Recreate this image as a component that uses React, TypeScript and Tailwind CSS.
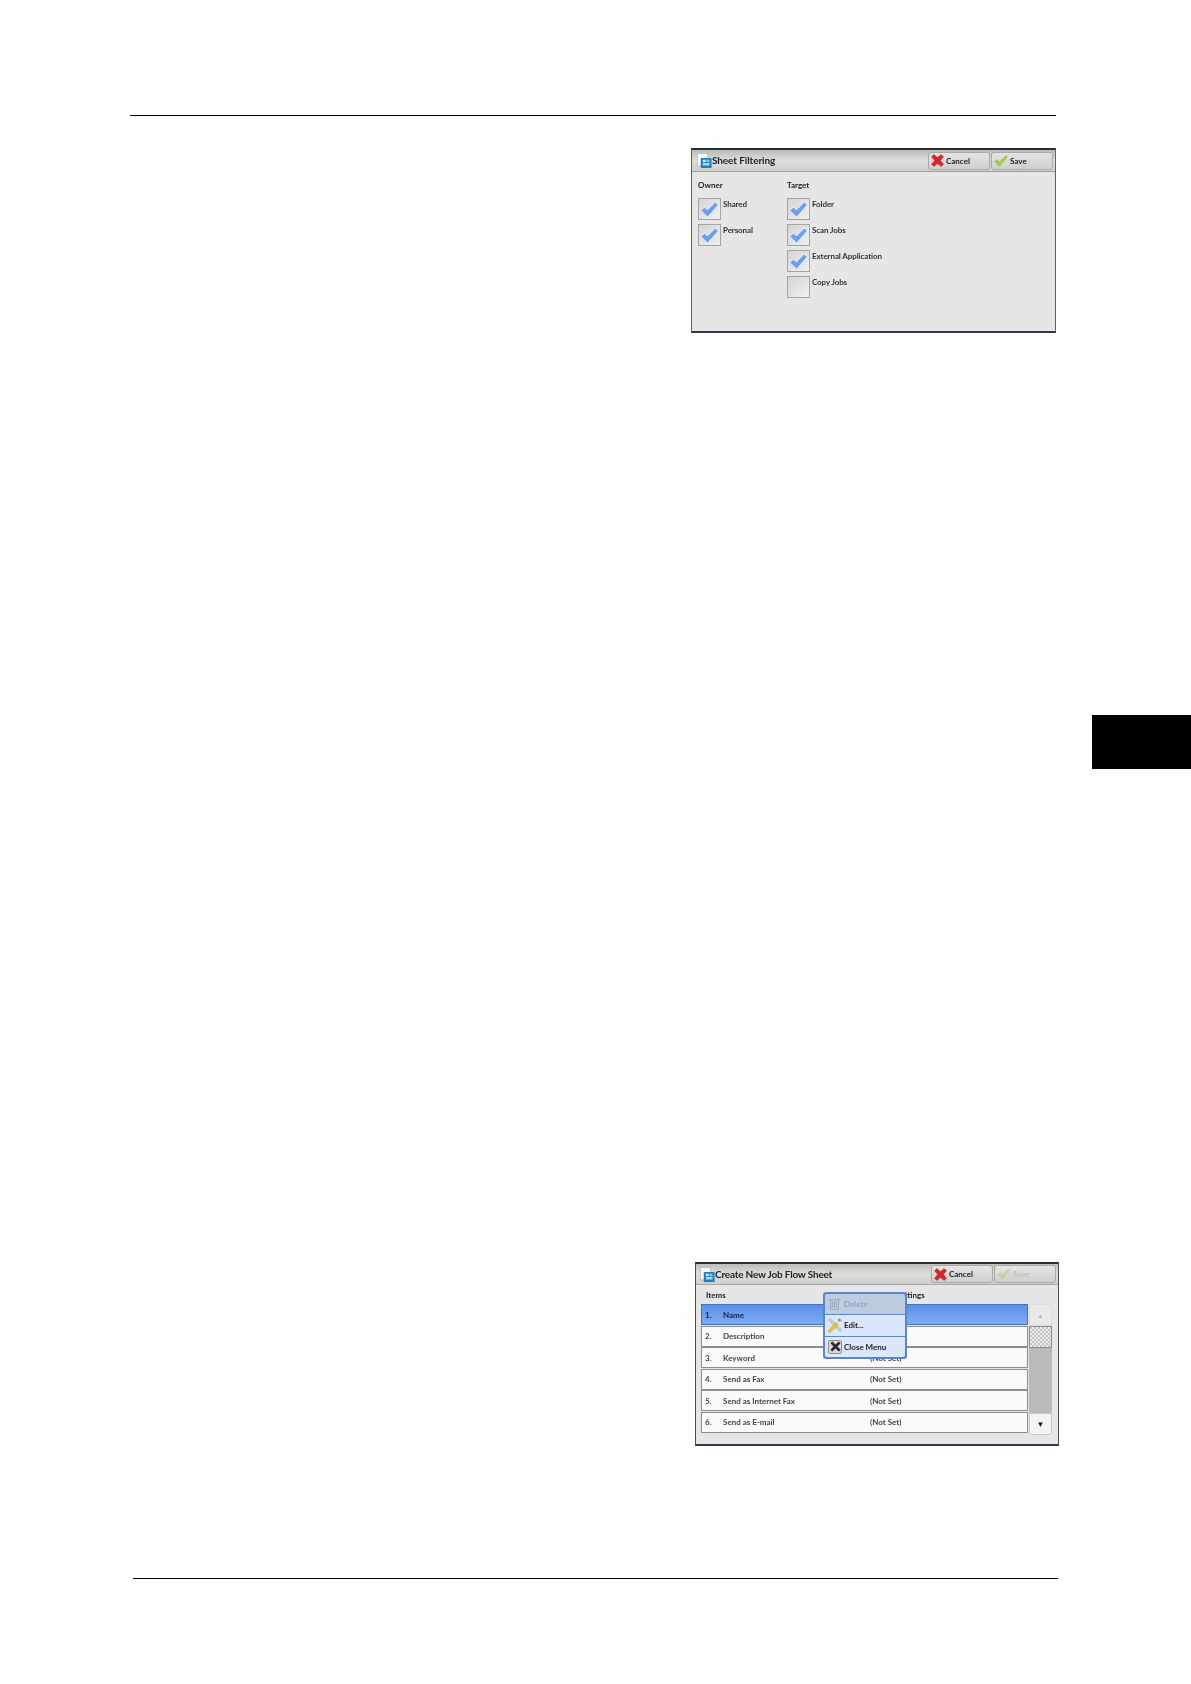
const font = "font-['Lato','Open_Sans','Liberation_Sans',sans-serif]";

function DocIcon({ className }: { className?: string }) {
  return (
    <svg viewBox="0 0 18 18" className={className}>
      <rect x="0.5" y="0.5" width="12" height="15" fill="#f7f9fb" stroke="#a7b1bc" strokeWidth="0.8" />
      <rect x="4.5" y="6" width="13" height="12" rx="1" fill="#1f7dc2" />
      <rect x="7" y="8" width="3.5" height="3" fill="#cfe8fa" />
      <rect x="11.5" y="8" width="3.5" height="3" fill="#8cc8ee" />
      <rect x="7" y="12" width="8" height="3" fill="#a8d6f4" />
    </svg>
  );
}

function RedX({ className }: { className?: string }) {
  return (
    <svg viewBox="0 0 14 14" className={className}>
      <path d="M0.5 3 3 0.5l4 3.2 4-3.2L13.5 3l-3.4 4 3.4 4-2.5 2.5-4-3.2-4 3.2L0.5 11l3.4-4z" fill="#d9262c" stroke="#b01d22" strokeWidth="0.4" />
    </svg>
  );
}

function GreenCheck({ className, dim }: { className?: string; dim?: boolean }) {
  return (
    <svg viewBox="0 0 16 14" className={className} opacity={dim ? 0.35 : 1}>
      <path d="M0.5 7.5 3.6 5.6l2.4 2.6L14 1l1.5 1.2L6.2 13z" fill="#a8d043" stroke="#7da52a" strokeWidth="0.5" />
    </svg>
  );
}

function Check({ on }: { on: boolean }) {
  return (
    <div className="flex h-[22px] w-[23px] shrink-0 items-center justify-center border border-[#a3a3a3] bg-gradient-to-br from-[#d5d5d5] to-[#f0f0f0]">
      {on ? (
        <svg viewBox="0 0 20 18" className="h-[17px] w-[19px]">
          <path d="M0.8 10 4.8 6.6l3 3L16 1.2l3.4 2.8L8 17z" fill="#6c9df0" stroke="#f2f6ff" strokeWidth="0.8" />
        </svg>
      ) : null}
    </div>
  );
}

function Option({ label, on }: { label: string; on: boolean }) {
  return (
    <div className="flex h-[22px] items-start gap-[2px]">
      <Check on={on} />
      <span className="mt-[1px] text-[8px] leading-[11px] font-bold tracking-[-0.1px] text-[#333]">{label}</span>
    </div>
  );
}

function TitleButton({ label, icon, disabled }: { label: string; icon: React.ReactNode; disabled?: boolean }) {
  return (
    <div className="flex h-[18px] w-[62px] items-center gap-[2px] rounded-[3px] border border-[#a9a9a9] bg-gradient-to-b from-[#e4e4e2] to-[#cfcfcd] pl-[2px]">
      {icon}
      <span className={`text-[8px] font-bold ${disabled ? "text-[#bdbdbd]" : "text-[#222]"}`}>{label}</span>
    </div>
  );
}

const rows = [
  { no: "1.", name: "Name", value: "" },
  { no: "2.", name: "Description", value: "" },
  { no: "3.", name: "Keyword", value: "(Not Set)" },
  { no: "4.", name: "Send as Fax", value: "(Not Set)" },
  { no: "5.", name: "Send as Internet Fax", value: "(Not Set)" },
  { no: "6.", name: "Send as E-mail", value: "(Not Set)" },
];

function SheetFiltering() {
  return (
    <div className="ml-[691px] h-[185px] w-[365px] border border-x-[#5a6470] border-t-2 border-b-2 border-t-[#2a2f36] border-b-[#2c3a4a] bg-[#e6e6e6] blur-[0.4px]">
      <div className="flex h-[22px] items-center justify-between border-b border-[#9d9d9d] bg-gradient-to-b from-[#b9b9b6] via-[#dededc] to-[#cfcfcc] pr-[2px] pl-[5px]">
        <div className="flex items-center">
          <DocIcon className="h-[15px] w-[15px]" />
          <span className="text-[10px] font-bold tracking-[-0.1px] text-[#222]">Sheet Filtering</span>
        </div>
        <div className="flex gap-[1px]">
          <TitleButton label="Cancel" icon={<RedX className="h-[13px] w-[13px]" />} />
          <TitleButton label="Save" icon={<GreenCheck className="h-[12px] w-[14px]" />} />
        </div>
      </div>
      <div className="flex pt-[8px] pl-[6px]">
        <div className="w-[89px]">
          <div className="mb-[7px] text-[8px] leading-[11px] font-bold text-[#222]">Owner</div>
          <div className="flex flex-col gap-[4px]">
            <Option label="Shared" on />
            <Option label="Personal" on />
          </div>
        </div>
        <div>
          <div className="mb-[7px] text-[8px] leading-[11px] font-bold text-[#222]">Target</div>
          <div className="flex flex-col gap-[4px]">
            <Option label="Folder" on />
            <Option label="Scan Jobs" on />
            <Option label="External Application" on />
            <Option label="Copy Jobs" on={false} />
          </div>
        </div>
      </div>
    </div>
  );
}

function JobFlowSheet() {
  return (
    <div className="relative ml-[695px] h-[184px] w-[364px] border border-x-[#4a4f55] border-t-2 border-b-2 border-t-[#2a2f36] border-b-[#2c3a4a] bg-[#e6e6e6] blur-[0.4px]">
      <div className="flex h-[21px] items-center justify-between border-b border-[#a5a5a5] bg-gradient-to-b from-[#bdbdba] via-[#dededc] to-[#cfcfcc] pr-[2px] pl-[4px]">
        <div className="flex items-center">
          <DocIcon className="h-[15px] w-[15px]" />
          <span className="text-[10px] font-bold tracking-[-0.2px] text-[#222]">Create New Job Flow Sheet</span>
        </div>
        <div className="flex gap-[1px]">
          <TitleButton label="Cancel" icon={<RedX className="h-[13px] w-[13px]" />} />
          <TitleButton label="Save" disabled icon={<GreenCheck dim className="h-[12px] w-[14px]" />} />
        </div>
      </div>
      <div className="flex h-[19px] items-center pl-[10px] text-[8px] font-bold text-[#222]">
        <span className="w-[161px]">Items</span>
        <span>Current Settings</span>
      </div>
      <div className="flex gap-[1px] pl-[5px]">
        <div className="flex w-[327px] flex-col gap-[0.5px]">
          {rows.map((row, i) => (
            <div
              key={row.no}
              className={`flex h-[21px] items-center border-[1.5px] pl-[3px] text-[8px] font-bold ${
                i === 0
                  ? "border-[#3f73c4] bg-gradient-to-b from-[#5a90ea] to-[#80aaf2] text-[#10264a]"
                  : "border-[#8d8d8d] bg-[#fafafa] text-[#444]"
              }`}
            >
              <span className="w-[18px]">{row.no}</span>
              <span className="w-[147px]">{row.name}</span>
              <span>{row.value}</span>
            </div>
          ))}
        </div>
        <div className="flex h-[131px] w-[23px] flex-col">
          <div className="flex h-[22px] items-center justify-center rounded-t-[3px] border border-[#dcdcdc] bg-[#e9e9e9] text-[6px] text-[#b5b5b5]">▲</div>
          <div className="h-[22px] border border-[#8f8f8f] bg-[repeating-conic-gradient(#ececec_0_25%,#c4c4c4_0_50%)] bg-[length:4px_4px]" />
          <div className="flex-1 bg-[#bababa]" />
          <div className="flex h-[22px] items-center justify-center rounded-b-[3px] border border-[#c9c9c9] bg-[#f4f4f4] text-[8px] text-[#111]">▼</div>
        </div>
      </div>

      <div className="absolute top-[28px] left-[127px] flex h-[67px] w-[84px] flex-col gap-[1px] rounded-[3px] border-2 border-[#5a86c8] bg-[#5a86c8] text-[8px] font-bold">
        <div className="flex h-[21px] items-center gap-[2px] rounded-t-[2px] bg-[#bccde2] pl-[2px] text-[#96a6bb]">
          <svg viewBox="0 0 16 16" className="h-[14px] w-[15px]">
            <path d="M2 3h12M3.5 3v11h9V3M6 5v7M8 5v7M10 5v7" fill="none" stroke="#95a5b8" strokeWidth="1" />
          </svg>
          Delete
        </div>
        <div className="flex h-[21px] items-center gap-[1px] bg-[#dbe8fb] pl-[2px] text-[#222]">
          <svg viewBox="0 0 16 16" className="h-[16px] w-[16px]">
            <path d="M3 1.5 14.5 13l-1.6 1.6L1.4 3z" fill="#c9ced4" stroke="#7d848c" strokeWidth="0.4" />
            <path d="M1 14l8-8.5 2.4 2.3L3.2 15.6z" fill="#ecc52c" stroke="#a88a14" strokeWidth="0.4" />
            <path d="M11 1.5a3 3 0 0 1 3.5 3.5L13 4l-1 1-1-1z" fill="#8f98a1" />
          </svg>
          Edit...
        </div>
        <div className="flex h-[21px] items-center gap-[2px] rounded-b-[2px] bg-[#dbe8fb] pl-[3px] text-[#222]">
          <div className="flex h-[14px] w-[14px] items-center justify-center rounded-[2px] border border-[#8f8f8f] bg-[#d8d8d8]">
            <svg viewBox="0 0 12 12" className="h-[11px] w-[11px]">
              <path d="M0.5 2.5 2.5 0.5 6 3.8 9.5 0.5l2 2L8.2 6l3.3 3.5-2 2L6 8.2l-3.5 3.3-2-2L3.8 6z" fill="#26282c" />
            </svg>
          </div>
          <span>Close Menu</span>
        </div>
      </div>
    </div>
  );
}

export default function App() {
  return (
    <div className={`${font} h-[1684px] w-[1191px] overflow-hidden bg-[#fefefe]`}>
      <div className="h-[115px]" />
      <div className="ml-[130px] h-px w-[926px] bg-black" />
      <div className="h-[32px]" />
      <SheetFiltering />
      <div className="h-[382px]" />
      <div className="ml-[1092px] h-[54px] w-[99px] bg-black" />
      <div className="h-[493px]" />
      <JobFlowSheet />
      <div className="h-[132px]" />
      <div className="ml-[133px] h-px w-[925px] bg-black" />
    </div>
  );
}
